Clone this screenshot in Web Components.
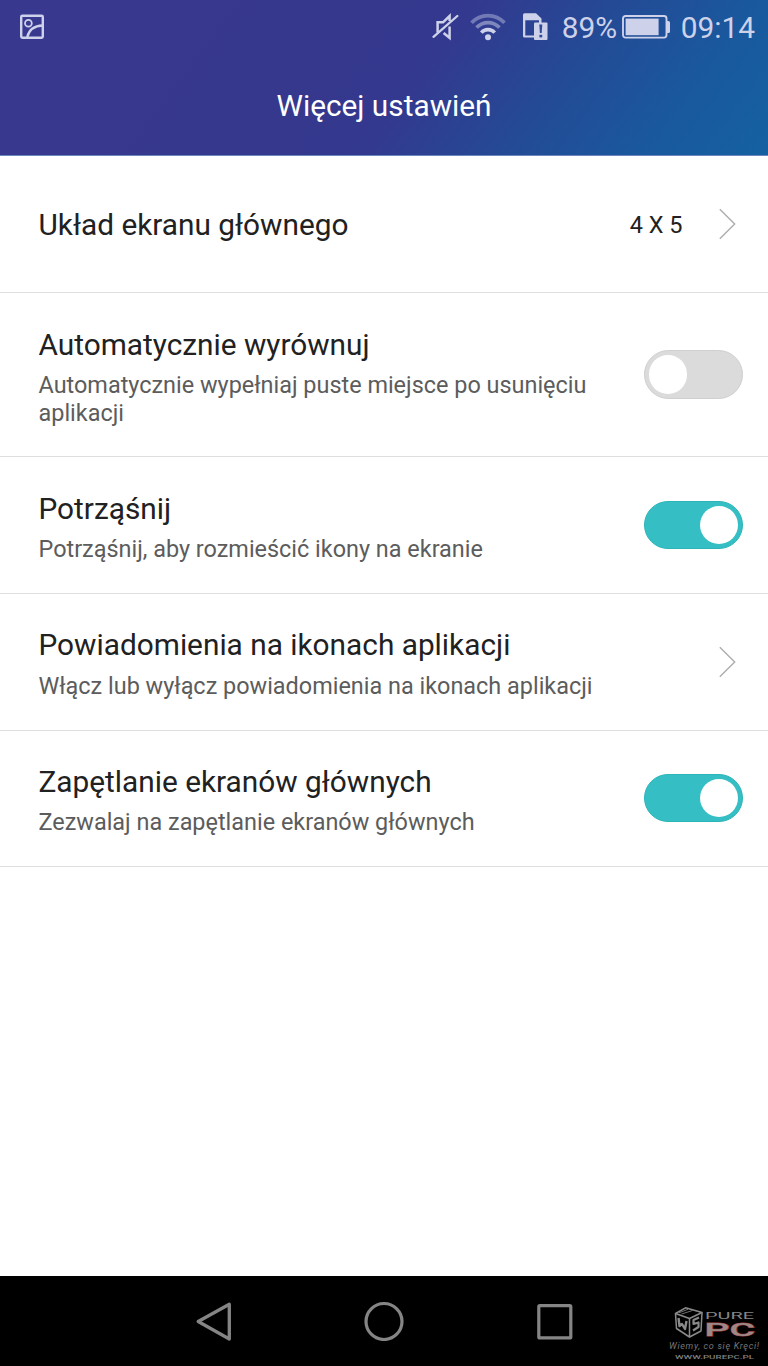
<!DOCTYPE html>
<html lang="pl">
<head>
<meta charset="utf-8">
<title>Więcej ustawień</title>
<style>
  html, body {
    margin: 0;
    height: 100%;
    overflow: hidden;
    background: #fff;
    font-family: Roboto, sans-serif;
  }
</style>
</head>
<body>
<settings-screen></settings-screen>

<script>
class StatusBar extends HTMLElement {
  constructor() {
    super()
    this.shadow = this.attachShadow({ mode: 'open' })
  }

  connectedCallback() {
    this.shadow.innerHTML = `
    <style>
      :host {
        display: flex;
        align-items: center;
        height: 53px;
        padding: 0 13px 0 20px;
        color: #cdd2ea;
        font-size: 29.87px;
        line-height: 35px;
      }

      svg {
        display: block;
        flex: none;
      }

      .spacer {
        flex: 1;
      }

      .mute { margin-right: 11px; }
      .wifi { margin-right: 17px; }
      .sim { margin-right: 14px; }
      .battery { margin: 1px 10.500px 0 5px; }

      span {
        padding-top: 2px;
      }
    </style>

    <svg width="24" height="26" viewBox="0 0 24 26" fill="none" stroke="currentColor" stroke-width="2">
      <rect x="1.200" y="1.700" width="21.600" height="22" rx="1.200" stroke-width="2.400"/>
      <circle cx="8.400" cy="9.200" r="3.400" stroke-width="1.800"/>
      <path d="M7.300 23C9 16.300 14 11.800 22.500 11.500" stroke-width="2.500"/>
    </svg>
    <div class="spacer"></div>
    <svg class="mute" width="27" height="28" viewBox="0 0 27 28" fill="none" stroke="currentColor" stroke-width="2.500">
      <path d="M5.600 19.500V9.300H11L17.600 3V8M17.600 13.500V24.800L11.600 20"/>
      <path d="M1.500 23.800L25.300 3" stroke-width="2.300" stroke-linecap="round"/>
    </svg>
    <svg class="wifi" width="36" height="28" viewBox="0 0 36 28" fill="none" stroke="currentColor" stroke-width="3.600">
      <path d="M1.500 9.800C10.500 .2 25.500 .2 34.500 9.800" opacity=".42"/>
      <path d="M6.500 14.600C13 7.900 23 7.900 29.500 14.600" opacity=".5"/>
      <path d="M11.300 19.600C15 15.600 21 15.600 24.700 19.600"/>
      <circle cx="18" cy="24.300" r="3" fill="currentColor" stroke="none"/>
    </svg>
    <svg class="sim" width="25" height="28" viewBox="0 0 25 28">
      <path fill="currentColor" fill-rule="evenodd" d="M1.500 .3H13L18.500 5.500V10H16V7.300H2.300V22.500H11V24.500H1.500Q0 24.500 0 23V2Q0 .3 1.500 .3Z"/>
      <rect x="11" y="9.500" width="13.500" height="17.500" rx="1" fill="currentColor"/>
      <path d="M16.300 11.500H19.300L18.700 20H16.900Z" fill="#304a98"/>
      <rect x="16.400" y="21.800" width="2.800" height="2.600" fill="#304a98"/>
    </svg>
    <span>89%</span>
    <svg class="battery" width="48" height="24" viewBox="0 0 48 24">
      <rect x="1" y="1" width="43.500" height="21.600" rx="2.500" fill="none" stroke="currentColor" stroke-width="1.900"/>
      <rect x="3.600" y="3.600" width="33" height="16.600" fill="currentColor"/>
      <path d="M45 6H46.500Q48 6 48 7.500V16.500Q48 18 46.500 18H45Z" fill="currentColor"/>
    </svg>
    <span>09:14</span>
    `
  }
}

class AppHeader extends HTMLElement {
  constructor() {
    super()
    this.shadow = this.attachShadow({ mode: 'open' })
  }

  connectedCallback() {
    this.shadow.innerHTML = `
    <style>
      :host {
        display: block;
        height: 155px;
        background: linear-gradient(127deg, #39388f 0%, #35388d 45%, #33398f 54%, #234b96 71%, #1a589d 85%, #1461a2 100%);
        border-bottom: .5px solid #6d86bd;
        color: #fff;
      }

      h1 {
        margin: 0;
        height: 102px;
        line-height: 105px;
        text-align: center;
        font-size: 29.8px;
        font-weight: 400;
      }
    </style>

    <status-bar></status-bar>
    <h1><slot></slot></h1>
    `
  }
}

class SettingRow extends HTMLElement {
  constructor() {
    super()
    this.shadow = this.attachShadow({ mode: 'open' })
  }

  connectedCallback() {
    this.shadow.innerHTML = `
    <style>
      :host {
        display: flex;
        align-items: center;
        box-sizing: border-box;
        height: var(--row-height, 136.6px);
        padding: 0 25.500px 0 38.500px;
        border-bottom: 1px solid #dedede;
      }

      .text {
        flex: 1;
        padding-top: var(--text-offset, 2px);
      }

      .title {
        font-size: 29.8px;
        line-height: 35px;
        color: #212121;
      }

      .summary {
        display: block;
        max-width: 570px;
        font-size: 23.43px;
        line-height: 27.500px;
        color: #5c5c5c;
      }

      ::slotted([slot="summary"]) {
        display: block;
        padding-top: 10.300px;
        margin-bottom: -2px;
      }
    </style>

    <div class="text">
      <div class="title"><slot></slot></div>
      <div class="summary"><slot name="summary"></slot></div>
    </div>
    <slot name="action"></slot>
    `
  }
}

class ToggleSwitch extends HTMLElement {
  constructor() {
    super()
    this.shadow = this.attachShadow({ mode: 'open' })
  }

  connectedCallback() {
    this.shadow.innerHTML = `
    <style>
      :host {
        display: flex;
        align-items: center;
        box-sizing: border-box;
        width: 98.500px;
        height: 48.500px;
        margin-bottom: .3px;
        padding: 0 3.500px;
        border: 1px solid #cfcfcf;
        border-radius: 25px;
        background: #dbdbdb;
      }

      :host([checked]) {
        justify-content: flex-end;
        border-color: #2cb5b8;
        background: #35bfc5;
      }

      .knob {
        width: 38.500px;
        height: 38.500px;
        border-radius: 50%;
        background: #fff;
      }
    </style>

    <div class="knob"></div>
    `
  }
}

class NextArrow extends HTMLElement {
  constructor() {
    super()
    this.shadow = this.attachShadow({ mode: 'open' })
  }

  connectedCallback() {
    this.shadow.innerHTML = `
    <style>
      :host {
        display: flex;
        align-items: center;
        gap: 36.500px;
        padding-right: 6.500px;
        font-size: 23.47px;
        color: #212121;
      }

      .value {
        padding-top: 2px;
      }

      svg {
        display: block;
      }
    </style>

    <div class="value"><slot></slot></div>
    <svg width="17" height="32" viewBox="0 0 17 32" fill="none" stroke="#adadad" stroke-width="1.400">
      <path d="M.8 1.300L15.700 16L.8 30.700"/>
    </svg>
    `
  }
}

class SiteMark extends HTMLElement {
  constructor() {
    super()
    this.shadow = this.attachShadow({ mode: 'open' })
  }

  connectedCallback() {
    this.shadow.innerHTML = `
    <style>
      :host {
        display: block;
      }

      svg {
        display: block;
      }
    </style>

    <svg width="100" height="60" viewBox="0 0 100 60" font-family="Roboto, sans-serif">
      <g fill="none" stroke="#8a8a8a" stroke-width="1.500" stroke-linejoin="round">
        <path d="M7.500 7.500L17.500 1.800L34 6.500L21.500 12.500Z"/>
        <path d="M7.500 7.500L8.500 22.500L21.500 31L21.500 12.500"/>
        <path d="M34 6.500L33 25L21.500 31" />
        <path d="M11 6.800L20 3.300M13.500 8L24.500 4.500" stroke-width=".8"/>
        <path d="M10.500 12L11.500 20L14 18L17 23L18.500 15" stroke-width="2.400"/>
        <path d="M31 11.500L25.500 14V18L30.500 16.500V21L25 24.500" stroke-width="2.200"/>
      </g>
      <text transform="translate(37 13) scale(2.100 1)" font-size="8.600" fill="#858585" textLength="23.300" lengthAdjust="spacingAndGlyphs">PURE</text>
      <text transform="translate(36.500 29.500) scale(2.200 1)" font-size="17.500" font-weight="500" fill="#9b8989" stroke="#a83a3a" stroke-width=".8" paint-order="stroke" textLength="23" lengthAdjust="spacingAndGlyphs">PC</text>
      <text x="1" y="43" font-size="9" font-style="italic" fill="#777" textLength="90" lengthAdjust="spacing">Wiemy, co się Kręci!</text>
      <text x="7" y="53" font-size="5.500" font-weight="500" fill="#7e7e7e" textLength="79" lengthAdjust="spacingAndGlyphs">WWW.PUREPC.PL</text>
    </svg>
    `
  }
}

class NavBar extends HTMLElement {
  constructor() {
    super()
    this.shadow = this.attachShadow({ mode: 'open' })
  }

  connectedCallback() {
    this.shadow.innerHTML = `
    <style>
      :host {
        display: grid;
        grid-template-columns: 128px 171px 170px 171px 128px;
        align-items: center;
        justify-items: center;
        box-sizing: border-box;
        height: 90px;
        background: #000;
      }

      svg {
        display: block;
        grid-row: 1;
      }

      .back { grid-column: 2; }
      .home { grid-column: 3; }
      .recent { grid-column: 4; }

      site-mark {
        grid-column: 5;
        justify-self: start;
        align-self: end;
        margin-left: 28px;
      }
    </style>

    <svg class="back" width="40" height="40" viewBox="0 0 40 40" fill="none" stroke="#858585" stroke-width="3.300" stroke-linejoin="round">
      <path d="M4.200 20.500L35.300 3.200V38Z"/>
    </svg>
    <svg class="home" width="40" height="40" viewBox="0 0 40 40" fill="none" stroke="#858585" stroke-width="3.200">
      <circle cx="20" cy="20.500" r="18"/>
    </svg>
    <svg class="recent" width="40" height="40" viewBox="0 0 40 40" fill="none" stroke="#858585" stroke-width="3.200">
      <rect x="3.800" y="4.700" width="32" height="32.200" rx="1"/>
    </svg>
    <site-mark></site-mark>
    `
  }
}

class SettingsScreen extends HTMLElement {
  constructor() {
    super()
    this.shadow = this.attachShadow({ mode: 'open' })
  }

  connectedCallback() {
    this.shadow.innerHTML = `
    <style>
      :host {
        display: flex;
        flex-direction: column;
        height: 1366px;
        background: #fff;
      }

      main {
        flex: 1;
      }

      .first {
        --row-height: 137px;
        --text-offset: 1px;
      }

      .tall {
        --row-height: 164.4px;
        --text-offset: 3px;
      }
    </style>

    <app-header>Więcej ustawień</app-header>
    <main>
      <setting-row class="first">
        Układ ekranu głównego
        <next-arrow slot="action">4 X 5</next-arrow>
      </setting-row>
      <setting-row class="tall">
        Automatycznie wyrównuj
        <span slot="summary">Automatycznie wypełniaj puste miejsce po usunięciu aplikacji</span>
        <toggle-switch slot="action"></toggle-switch>
      </setting-row>
      <setting-row>
        Potrząśnij
        <span slot="summary">Potrząśnij, aby rozmieścić ikony na ekranie</span>
        <toggle-switch slot="action" checked></toggle-switch>
      </setting-row>
      <setting-row>
        Powiadomienia na ikonach aplikacji
        <span slot="summary">Włącz lub wyłącz powiadomienia na ikonach aplikacji</span>
        <next-arrow slot="action"></next-arrow>
      </setting-row>
      <setting-row>
        Zapętlanie ekranów głównych
        <span slot="summary">Zezwalaj na zapętlanie ekranów głównych</span>
        <toggle-switch slot="action" checked></toggle-switch>
      </setting-row>
    </main>
    <nav-bar></nav-bar>
    `
  }
}

customElements.define('status-bar', StatusBar)
customElements.define('app-header', AppHeader)
customElements.define('setting-row', SettingRow)
customElements.define('toggle-switch', ToggleSwitch)
customElements.define('next-arrow', NextArrow)
customElements.define('site-mark', SiteMark)
customElements.define('nav-bar', NavBar)
customElements.define('settings-screen', SettingsScreen)
</script>
</body>
</html>
